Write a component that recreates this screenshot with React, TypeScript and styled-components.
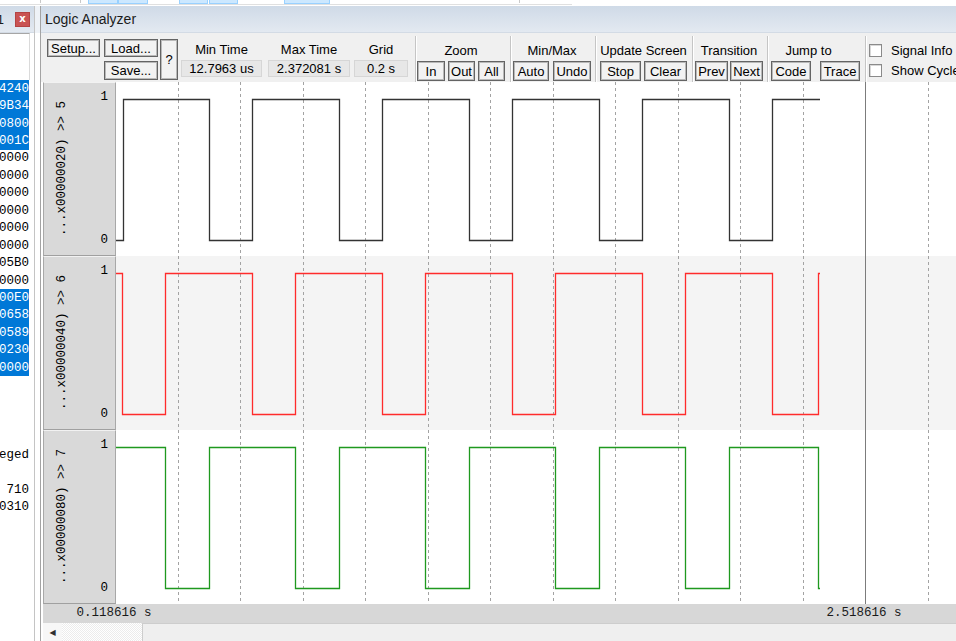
import React from 'react';
import styled, { createGlobalStyle } from 'styled-components';

const GlobalStyle = createGlobalStyle`
	*, *::before, *::after {
		box-sizing: border-box;
	}
	html, body {
		margin: 0;
		padding: 0;
		background: #ffffff;
		overflow: hidden;
	}
	body {
		font-family: 'Liberation Sans', Arial, sans-serif;
		color: #000;
	}
`;

const Screen = styled.div`
	width: 956px;
	height: 641px;
	display: flex;
	flex-direction: column;
	background: #ffffff;
	overflow: hidden;
`;

const TopStrip = styled.div`
	height: 6px;
	flex-shrink: 0;
	display: flex;
`;

const StripBar = styled.div`
	width: 572px;
	height: 5px;
	display: flex;
	align-items: flex-start;
	border-bottom: 1px solid #e0e0e0;
`;

const StripItem = styled.div<{ $ml: number; $w: number; $box?: boolean }>`
	flex-shrink: 0;
	margin-left: ${(p) => p.$ml}px;
	width: ${(p) => p.$w}px;
	height: ${(p) => (p.$box ? 4 : 3)}px;
	background: ${(p) => (p.$box ? '#cce8ff' : '#c9c9c9')};
	border: ${(p) => (p.$box ? '1px solid #99d1ff' : 'none')};
	border-top: none;
`;

const Body = styled.div`
	flex: 1;
	min-height: 0;
	display: flex;
`;

const TitleBar = styled.div`
	height: 27px;
	flex-shrink: 0;
	display: flex;
	align-items: center;
	background: linear-gradient(to bottom, #cfdae7, #e3e9f1);
	border-bottom: 1px solid #d3dbe5;
	font-size: 14px;
	color: #1b1b1b;
	white-space: nowrap;
	overflow: hidden;
`;

const LeftPanel = styled.div`
	width: 35px;
	flex-shrink: 0;
	display: flex;
	flex-direction: column;
	border-right: 1px solid #c4c4c4;
`;

const ClippedTitle = styled.div`
	width: 4px;
	display: flex;
	justify-content: flex-end;
	overflow: hidden;
	font-size: 13px;
`;

const CloseButton = styled.div`
	width: 15px;
	height: 15px;
	margin-left: 11px;
	display: flex;
	align-items: center;
	justify-content: center;
	background: #c95353;
	border: 1px solid #b44343;
	color: #fff;
	font: bold 10px 'DejaVu Sans', sans-serif;
	line-height: 1;
`;

const ListHeader = styled.div`
	height: 47px;
	flex-shrink: 0;
	display: flex;
`;

const HeaderCell = styled.div`
	width: 30px;
	height: 100%;
	border-top: 1px solid #a6a6a6;
	border-right: 1px solid #dadada;
`;

const ListItem = styled.div<{ $selected?: boolean }>`
	width: 29px;
	height: 17.45px;
	display: flex;
	align-items: center;
	justify-content: flex-end;
	overflow: hidden;
	white-space: nowrap;
	background: ${(p) => (p.$selected ? '#0078d7' : 'transparent')};
	color: ${(p) => (p.$selected ? '#ffffff' : '#000000')};
	font: 12.5px 'Liberation Mono', monospace;
`;

const Splitter = styled.div`
	width: 5px;
	flex-shrink: 0;
	display: flex;
	flex-direction: column;
	background: #ffffff;
`;

const SplitterTop = styled.div`
	height: 27px;
	background: #eef2f7;
`;

const Analyzer = styled.div`
	flex: 1;
	min-width: 0;
	display: flex;
	flex-direction: column;
	border-left: 1px solid #a3a3a3;
`;

const AnalyzerTitle = styled(TitleBar)`
	padding-left: 4px;
`;

const Toolbar = styled.div`
	height: 49px;
	flex-shrink: 0;
	display: flex;
	align-items: flex-start;
	padding: 6px 0 0 6px;
	background: #f0f0f0;
	font-size: 13px;
	overflow: hidden;
	white-space: nowrap;
`;

const ToolButton = styled.button<{ $w: number; $h?: number; $ml?: number }>`
	flex-shrink: 0;
	width: ${(p) => p.$w}px;
	height: ${(p) => p.$h ?? 20}px;
	margin: 0 0 0 ${(p) => p.$ml ?? 0}px;
	padding: 0;
	display: flex;
	align-items: center;
	justify-content: center;
	background: #f2f2f2;
	border: 1px solid #646464;
	box-shadow: inset 0 0 0 1px #b9b9b9;
	font: 13px 'Liberation Sans', Arial, sans-serif;
	color: #000;
`;

const ButtonStack = styled.div<{ $ml: number }>`
	flex-shrink: 0;
	margin-left: ${(p) => p.$ml}px;
	display: flex;
	flex-direction: column;
	gap: 4px;
`;

const Group = styled.div<{ $w: number; $ml: number }>`
	flex-shrink: 0;
	width: ${(p) => p.$w}px;
	margin-left: ${(p) => p.$ml}px;
	display: flex;
	flex-direction: column;
	align-items: center;
`;

const GroupLabel = styled.div<{ $h: number; $shift?: number }>`
	height: ${(p) => p.$h}px;
	line-height: ${(p) => p.$h + 1}px;
	padding-right: ${(p) => p.$shift ?? 0}px;
	white-space: nowrap;
`;

const ValueBox = styled.div`
	width: 100%;
	height: 17px;
	line-height: 15px;
	text-align: center;
	background: #e7e7e7;
	border: 1px solid #d6d6d6;
`;

const ButtonRow = styled.div<{ $gap: number }>`
	display: flex;
	gap: ${(p) => p.$gap}px;
`;

const Separator = styled.div<{ $ml: number }>`
	flex-shrink: 0;
	width: 2px;
	height: 46px;
	margin: -3px 0 0 ${(p) => p.$ml}px;
	border-left: 1px solid #c5c5c5;
	border-right: 1px solid #ffffff;
`;

const Checks = styled.div<{ $ml: number }>`
	flex-shrink: 0;
	margin: 5px 0 0 ${(p) => p.$ml}px;
	display: flex;
	flex-direction: column;
	gap: 7px;
`;

const CheckRow = styled.label`
	height: 13px;
	display: flex;
	align-items: center;
	gap: 9px;
`;

const CheckBox = styled.span`
	width: 13px;
	height: 13px;
	background: #ffffff;
	border: 1px solid #8a8a8a;
	box-shadow: inset 1px 1px 0 #d8d8d8;
`;

const WaveArea = styled.div`
	height: 522px;
	flex-shrink: 0;
	margin-left: 2px;
	display: flex;
`;

const NameColumn = styled.div`
	width: 73px;
	flex-shrink: 0;
	display: flex;
	flex-direction: column;
`;

const NameCell = styled.div`
	flex: 1;
	display: flex;
	background: #d9d9d9;
	border-left: 1px solid #a8a8a8;
	border-right: 1px solid #a8a8a8;
	border-bottom: 1px solid #a0a0a0;
	border-top: 1px solid #f2f2f2;
	font: 12.5px 'Liberation Mono', monospace;
`;

const SignalName = styled.div`
	flex: 1;
	display: flex;
	align-items: center;
	justify-content: center;
	padding-right: 18px;
	& > span {
		writing-mode: vertical-rl;
		transform: rotate(180deg);
		white-space: nowrap;
	}
`;

const Levels = styled.div`
	width: 17px;
	display: flex;
	flex-direction: column;
	justify-content: space-between;
	align-items: flex-end;
	padding: 8px 7px 8px 0;
	line-height: 13px;
`;

const PlotSvg = styled.svg`
	flex: 1;
	display: block;
	height: 522px;
	background: #ffffff;
`;

const Axis = styled.div`
	height: 19px;
	flex-shrink: 0;
	margin-left: 2px;
	position: relative;
	background: #d7d7d7;
	font: 12.5px 'Liberation Mono', monospace;
	color: #1a1a1a;
`;

const AxisLabel = styled.span`
	position: absolute;
	top: 0;
	line-height: 19px;
	transform: translateX(-50%);
	white-space: nowrap;
`;

const Scrollbar = styled.div`
	height: 18px;
	flex-shrink: 0;
	margin-left: 2px;
	display: flex;
`;

const ScrollArrow = styled.div`
	width: 19px;
	display: flex;
	align-items: center;
	justify-content: center;
	background: #f7f7f7;
	color: #303030;
	font: 8px 'DejaVu Sans', sans-serif;
`;

const ScrollTrack = styled.div`
	width: 80px;
	background: repeating-conic-gradient(#ececec 0 25%, #ffffff 0 50%) 0 0 / 2px 2px;
`;

const ScrollThumb = styled.div`
	flex: 1;
	background: #efefef;
	border-top: 1px solid #cdcdcd;
	border-left: 1px solid #cdcdcd;
`;

const listItems: { text: string; selected?: boolean }[] = [
	{ text: '0x000F4240', selected: true },
	{ text: '0x20009B34', selected: true },
	{ text: '0x08000800', selected: true },
	{ text: '0x0000001C', selected: true },
	{ text: '0x00000000' },
	{ text: '0x00000000' },
	{ text: '0x00000000' },
	{ text: '0x00000000' },
	{ text: '0x00000000' },
	{ text: '0x00000000' },
	{ text: '0x080005B0' },
	{ text: '0x00000000' },
	{ text: '0x080000E0', selected: true },
	{ text: '0x20000658', selected: true },
	{ text: '0x08000589', selected: true },
	{ text: '0x20000230', selected: true },
	{ text: '0x00000000', selected: true },
	{ text: '' },
	{ text: '' },
	{ text: '' },
	{ text: '' },
	{ text: 'Privileged' },
	{ text: '' },
	{ text: '710' },
	{ text: '0x20000310' },
];

// plot geometry (page x of the plot's left edge, grid spacing, cursor)
const PLOT_X0 = 116;
const PLOT_W = 840;
const PLOT_H = 522;
const ROW_H = PLOT_H / 3;
const WAVE_END = 820;
const GRID_X = Array.from({ length: 13 }, (_, k) => 178 + 62.5 * k);
const CURSOR_X = 866;

type Trace = { name: string; color: string; start: 0 | 1; edges: number[] };

const traces: Trace[] = [
	{
		name: '...x00000020) >> 5',
		color: '#333333',
		start: 0,
		edges: [123, 209, 252, 339, 382, 469, 512, 599, 642, 729, 772],
	},
	{
		name: '...x00000040) >> 6',
		color: '#ff2b2b',
		start: 1,
		edges: [122, 165, 252, 295, 382, 425, 512, 555, 642, 685, 772, 818],
	},
	{
		name: '...x00000080) >> 7',
		color: '#1f991f',
		start: 1,
		edges: [165, 209, 295, 339, 425, 469, 555, 599, 685, 729, 818],
	},
];

const tracePath = (t: Trace, top: number) => {
	const hi = top + 17.5;
	const lo = top + 158.5;
	let level = t.start;
	let d = `M0 ${level ? hi : lo}`;
	t.edges.forEach((e) => {
		d += ` H${e - PLOT_X0 + 0.5}`;
		level = level ? 0 : 1;
		d += ` V${level ? hi : lo}`;
	});
	d += ` H${WAVE_END - PLOT_X0}`;
	return d;
};

const axisMarks = [
	{ label: '0.118616 s', x: PLOT_X0 },
	{ label: '2.518616 s', x: CURSOR_X },
];

const App = () => {
	return (
		<Screen>
			<GlobalStyle />
			<TopStrip>
				<StripBar>
					<StripItem $ml={40} $w={1} />
					<StripItem $ml={39} $w={1} />
					<StripItem $ml={7} $w={30} $box />
					<StripItem $ml={0} $w={30} $box />
					<StripItem $ml={31} $w={29} $box />
					<StripItem $ml={1} $w={29} $box />
					<StripItem $ml={46} $w={46} $box />
					<StripItem $ml={189} $w={1} />
				</StripBar>
			</TopStrip>
			<Body>
				<LeftPanel>
					<TitleBar>
						<ClippedTitle>Watch&nbsp;1</ClippedTitle>
						<CloseButton>x</CloseButton>
					</TitleBar>
					<ListHeader>
						<HeaderCell />
					</ListHeader>
					{listItems.map((item, i) => (
						<ListItem key={i} $selected={item.selected}>
							{item.text}
						</ListItem>
					))}
				</LeftPanel>
				<Splitter>
					<SplitterTop />
				</Splitter>
				<Analyzer>
					<AnalyzerTitle>Logic Analyzer</AnalyzerTitle>
					<Toolbar>
						<ToolButton $w={53} $h={18}>
							Setup...
						</ToolButton>
						<ButtonStack $ml={4}>
							<ToolButton $w={54} $h={18}>
								Load...
							</ToolButton>
							<ToolButton $w={54} $h={19}>
								Save...
							</ToolButton>
						</ButtonStack>
						<ToolButton $w={18} $h={41} $ml={2}>
							?
						</ToolButton>
						<Group $w={81} $ml={3}>
							<GroupLabel $h={21}>Min Time</GroupLabel>
							<ValueBox>12.7963 us</ValueBox>
						</Group>
						<Group $w={82} $ml={6}>
							<GroupLabel $h={21}>Max Time</GroupLabel>
							<ValueBox>2.372081 s</ValueBox>
						</Group>
						<Group $w={54} $ml={4}>
							<GroupLabel $h={21}>Grid</GroupLabel>
							<ValueBox>0.2 s</ValueBox>
						</Group>
						<Separator $ml={7} />
						<Group $w={88} $ml={0}>
							<GroupLabel $h={22}>Zoom</GroupLabel>
							<ButtonRow $gap={3}>
								<ToolButton $w={28}>In</ToolButton>
								<ToolButton $w={27}>Out</ToolButton>
								<ToolButton $w={27}>All</ToolButton>
							</ButtonRow>
						</Group>
						<Separator $ml={5} />
						<Group $w={78} $ml={1}>
							<GroupLabel $h={22}>Min/Max</GroupLabel>
							<ButtonRow $gap={4}>
								<ToolButton $w={36}>Auto</ToolButton>
								<ToolButton $w={38}>Undo</ToolButton>
							</ButtonRow>
						</Group>
						<Separator $ml={4} />
						<Group $w={87} $ml={3}>
							<GroupLabel $h={22}>Update Screen</GroupLabel>
							<ButtonRow $gap={3}>
								<ToolButton $w={41}>Stop</ToolButton>
								<ToolButton $w={43}>Clear</ToolButton>
							</ButtonRow>
						</Group>
						<Separator $ml={5} />
						<Group $w={68} $ml={1}>
							<GroupLabel $h={22}>Transition</GroupLabel>
							<ButtonRow $gap={2}>
								<ToolButton $w={33}>Prev</ToolButton>
								<ToolButton $w={33}>Next</ToolButton>
							</ButtonRow>
						</Group>
						<Separator $ml={4} />
						<Group $w={89} $ml={2}>
							<GroupLabel $h={22} $shift={14}>
								Jump to
							</GroupLabel>
							<ButtonRow $gap={9}>
								<ToolButton $w={40}>Code</ToolButton>
								<ToolButton $w={40}>Trace</ToolButton>
							</ButtonRow>
						</Group>
						<Separator $ml={5} />
						<Checks $ml={2}>
							<CheckRow>
								<CheckBox />
								Signal Info
							</CheckRow>
							<CheckRow>
								<CheckBox />
								Show Cycles
							</CheckRow>
						</Checks>
					</Toolbar>
					<WaveArea>
						<NameColumn>
							{traces.map((t) => (
								<NameCell key={t.name}>
									<SignalName>
										<span>{t.name}</span>
									</SignalName>
									<Levels>
										<span>1</span>
										<span>0</span>
									</Levels>
								</NameCell>
							))}
						</NameColumn>
						<PlotSvg width={PLOT_W} height={PLOT_H} viewBox={`0 0 ${PLOT_W} ${PLOT_H}`}>
							<rect x={0} y={ROW_H} width={PLOT_W} height={ROW_H} fill="#f4f4f4" />
							{GRID_X.filter((x) => Math.abs(x - CURSOR_X) > 2).map((x) => (
								<line
									key={x}
									x1={Math.floor(x - PLOT_X0) + 0.5}
									x2={Math.floor(x - PLOT_X0) + 0.5}
									y1={0}
									y2={PLOT_H}
									stroke="#a3a3a3"
									strokeDasharray="3 3"
								/>
							))}
							<line
								x1={CURSOR_X - PLOT_X0 - 0.5}
								x2={CURSOR_X - PLOT_X0 - 0.5}
								y1={0}
								y2={PLOT_H}
								stroke="#7c7c7c"
							/>
							{traces.map((t, i) => (
								<path
									key={t.name}
									d={tracePath(t, i * ROW_H)}
									fill="none"
									stroke={t.color}
									strokeWidth={1.3}
								/>
							))}
						</PlotSvg>
					</WaveArea>
					<Axis>
						{axisMarks.map((m) => (
							<AxisLabel key={m.label} style={{ left: m.x - 43 - 2 }}>
								{m.label}
							</AxisLabel>
						))}
					</Axis>
					<Scrollbar>
						<ScrollArrow>◀</ScrollArrow>
						<ScrollTrack />
						<ScrollThumb />
					</Scrollbar>
				</Analyzer>
			</Body>
		</Screen>
	);
};

export default App;
